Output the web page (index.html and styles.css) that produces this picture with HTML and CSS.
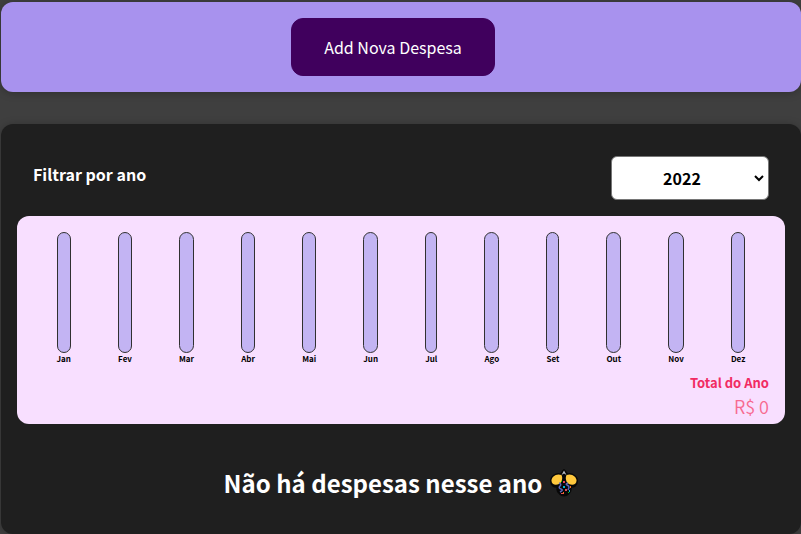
FILE: index.html
```html
<!DOCTYPE html>
<html lang="pt-BR">
<head>
<meta charset="utf-8">
<meta name="viewport" content="width=device-width, initial-scale=1">
<title>Despesas</title>
<link rel="stylesheet" href="styles.css">
</head>
<body>
<section class="new-expense">
  <button class="new-expense-button" type="button">Add Nova Despesa</button>
</section>
<main class="expenses">
  <div class="filter">
    <label class="filter-label" for="year">Filtrar por ano</label>
    <select class="filter-select" id="year">
      <option>2022</option>
      <option>2021</option>
      <option>2020</option>
      <option>2019</option>
    </select>
  </div>
  <section class="chart">
    <div class="chart-bars">
      <div class="chart-bar"><div class="bar-track"></div><div class="bar-label">Jan</div></div>
      <div class="chart-bar"><div class="bar-track"></div><div class="bar-label">Fev</div></div>
      <div class="chart-bar"><div class="bar-track"></div><div class="bar-label">Mar</div></div>
      <div class="chart-bar"><div class="bar-track"></div><div class="bar-label">Abr</div></div>
      <div class="chart-bar"><div class="bar-track"></div><div class="bar-label">Mai</div></div>
      <div class="chart-bar"><div class="bar-track"></div><div class="bar-label">Jun</div></div>
      <div class="chart-bar"><div class="bar-track"></div><div class="bar-label">Jul</div></div>
      <div class="chart-bar"><div class="bar-track"></div><div class="bar-label">Ago</div></div>
      <div class="chart-bar"><div class="bar-track"></div><div class="bar-label">Set</div></div>
      <div class="chart-bar"><div class="bar-track"></div><div class="bar-label">Out</div></div>
      <div class="chart-bar"><div class="bar-track"></div><div class="bar-label">Nov</div></div>
      <div class="chart-bar"><div class="bar-track"></div><div class="bar-label">Dez</div></div>
    </div>
    <div class="total">
      <div class="total-label">Total do Ano</div>
      <div class="total-value">R$ 0</div>
    </div>
  </section>
  <h2 class="empty">Não há despesas nesse ano
    <svg class="empty-icon" viewBox="0 0 28 28" aria-hidden="true">
      <path d="M14 1 L10.5 5.5 C6 4 1 7.500 1 12 C1 16 4 18.500 8 17.500 C7 20 7 23 10 25 C12 27 16 27 18 25 C21 23 21 20 20 17.500 C24 18.500 27 16 27 12 C27 7.500 22 4 17.500 5.500 Z" fill="#080808" stroke="#080808" stroke-width="2" stroke-linejoin="round"/>
      <path d="M11.500 6 C6 4 1.500 8 1.500 11.500 C1.500 16 6 16.500 9 15 C12 13.500 13 9 11.500 6Z" fill="#ffc83d"/>
      <path d="M16.500 6 C22 4 26.500 8 26.500 11.500 C26.500 16 22 16.500 19 15 C16 13.500 15 9 16.500 6Z" fill="#ffc83d"/>
      <path d="M11.500 6 L14 1.500 L16.500 6 L14 4.500Z" fill="#b9bbc0"/>
      <path d="M9 14q3 1 1 3t1 3t-1 3M18 14q-3 1-1 2t2 2t-1 3" fill="none" stroke="#5865b8" stroke-width="1.500"/>
      <path d="M13 12h2v2h-2zM15 20h2v2h-2zM11 24h2v1h-2z" fill="#e74856"/>
      <path d="M13 17h2v2h-2zM19 21h1v2h-1z" fill="#00b7d8"/>
      <path d="M13 23h1v2h-1zM20 17h1v2h-1z" fill="#ef7021"/>
      <path d="M11 12h1v1h-1zM18 23h1v1h-1z" fill="#16c60c"/>
    </svg>
  </h2>
</main>
</body>
</html>
```
FILE: styles.css
```css
* {
  box-sizing: border-box;
}

body {
  margin: 0;
  padding: 2px 0 0 1px;
  background: #3f3f3f;
  font-family: "Noto Sans CJK JP", "Noto Sans", sans-serif;
}

.new-expense,
.expenses {
  padding: 16px;
  border-radius: 12px;
  box-shadow: 0 1px 8px rgba(0, 0, 0, 0.25);
}

.new-expense {
  margin-bottom: 32px;
  background: #a892ee;
  text-align: center;
}

.new-expense-button {
  display: inline-block;
  margin-right: 16px;
  padding: 16px 32px;
  border: 1px solid #40005d;
  border-radius: 12px;
  background: #40005d;
  color: #fff;
  font: inherit;
  font-size: 16px;
  line-height: 24px;
  vertical-align: top;
}

.expenses {
  background: #1f1f1f;
  color: #fff;
}

.filter {
  display: flex;
  align-items: center;
  justify-content: space-between;
  padding: 16px;
}

.filter-label {
  padding-bottom: 8px;
  font-size: 16px;
  font-weight: 700;
  line-height: 24px;
}

.filter-select {
  width: 158px;
  height: 44px;
  padding: 0 48px 0 32px;
  border: 1px solid #767676;
  border-radius: 6px;
  appearance: none;
  background: #fff url("data:image/svg+xml,%3Csvg xmlns='http://www.w3.org/2000/svg' width='10' height='7'%3E%3Cpath d='M1 1l4 4 4-4' fill='none' stroke='black' stroke-width='2'/%3E%3C/svg%3E") no-repeat right 4px center;
  color: #000;
  font: inherit;
  font-size: 16px;
  font-weight: 700;
  text-align: center;
}

.chart {
  padding: 16px 16px 4px;
  border-radius: 12px;
  background: #f8dfff;
}

.chart-bars {
  display: flex;
  justify-content: space-around;
}

.bar-track {
  height: 121px;
  border: 1px solid #313131;
  border-radius: 12px;
  background: #c3b4f3;
}

.bar-label {
  color: #000;
  font-size: 8px;
  font-weight: 700;
  line-height: 12px;
}

.total {
  padding-top: 8px;
  text-align: right;
}

.total-label {
  color: #f12b62;
  font-size: 13px;
  font-weight: 700;
  line-height: 20px;
}

.total-value {
  color: #f76a90;
  font-size: 18px;
  font-weight: 350;
  line-height: 27px;
}

.empty {
  display: flex;
  align-items: center;
  justify-content: center;
  gap: 8px;
  margin: 40px 0 16px;
  font-size: 24px;
  font-weight: 700;
  line-height: 38px;
}

.empty-icon {
  width: 28px;
  height: 28px;
}
```
